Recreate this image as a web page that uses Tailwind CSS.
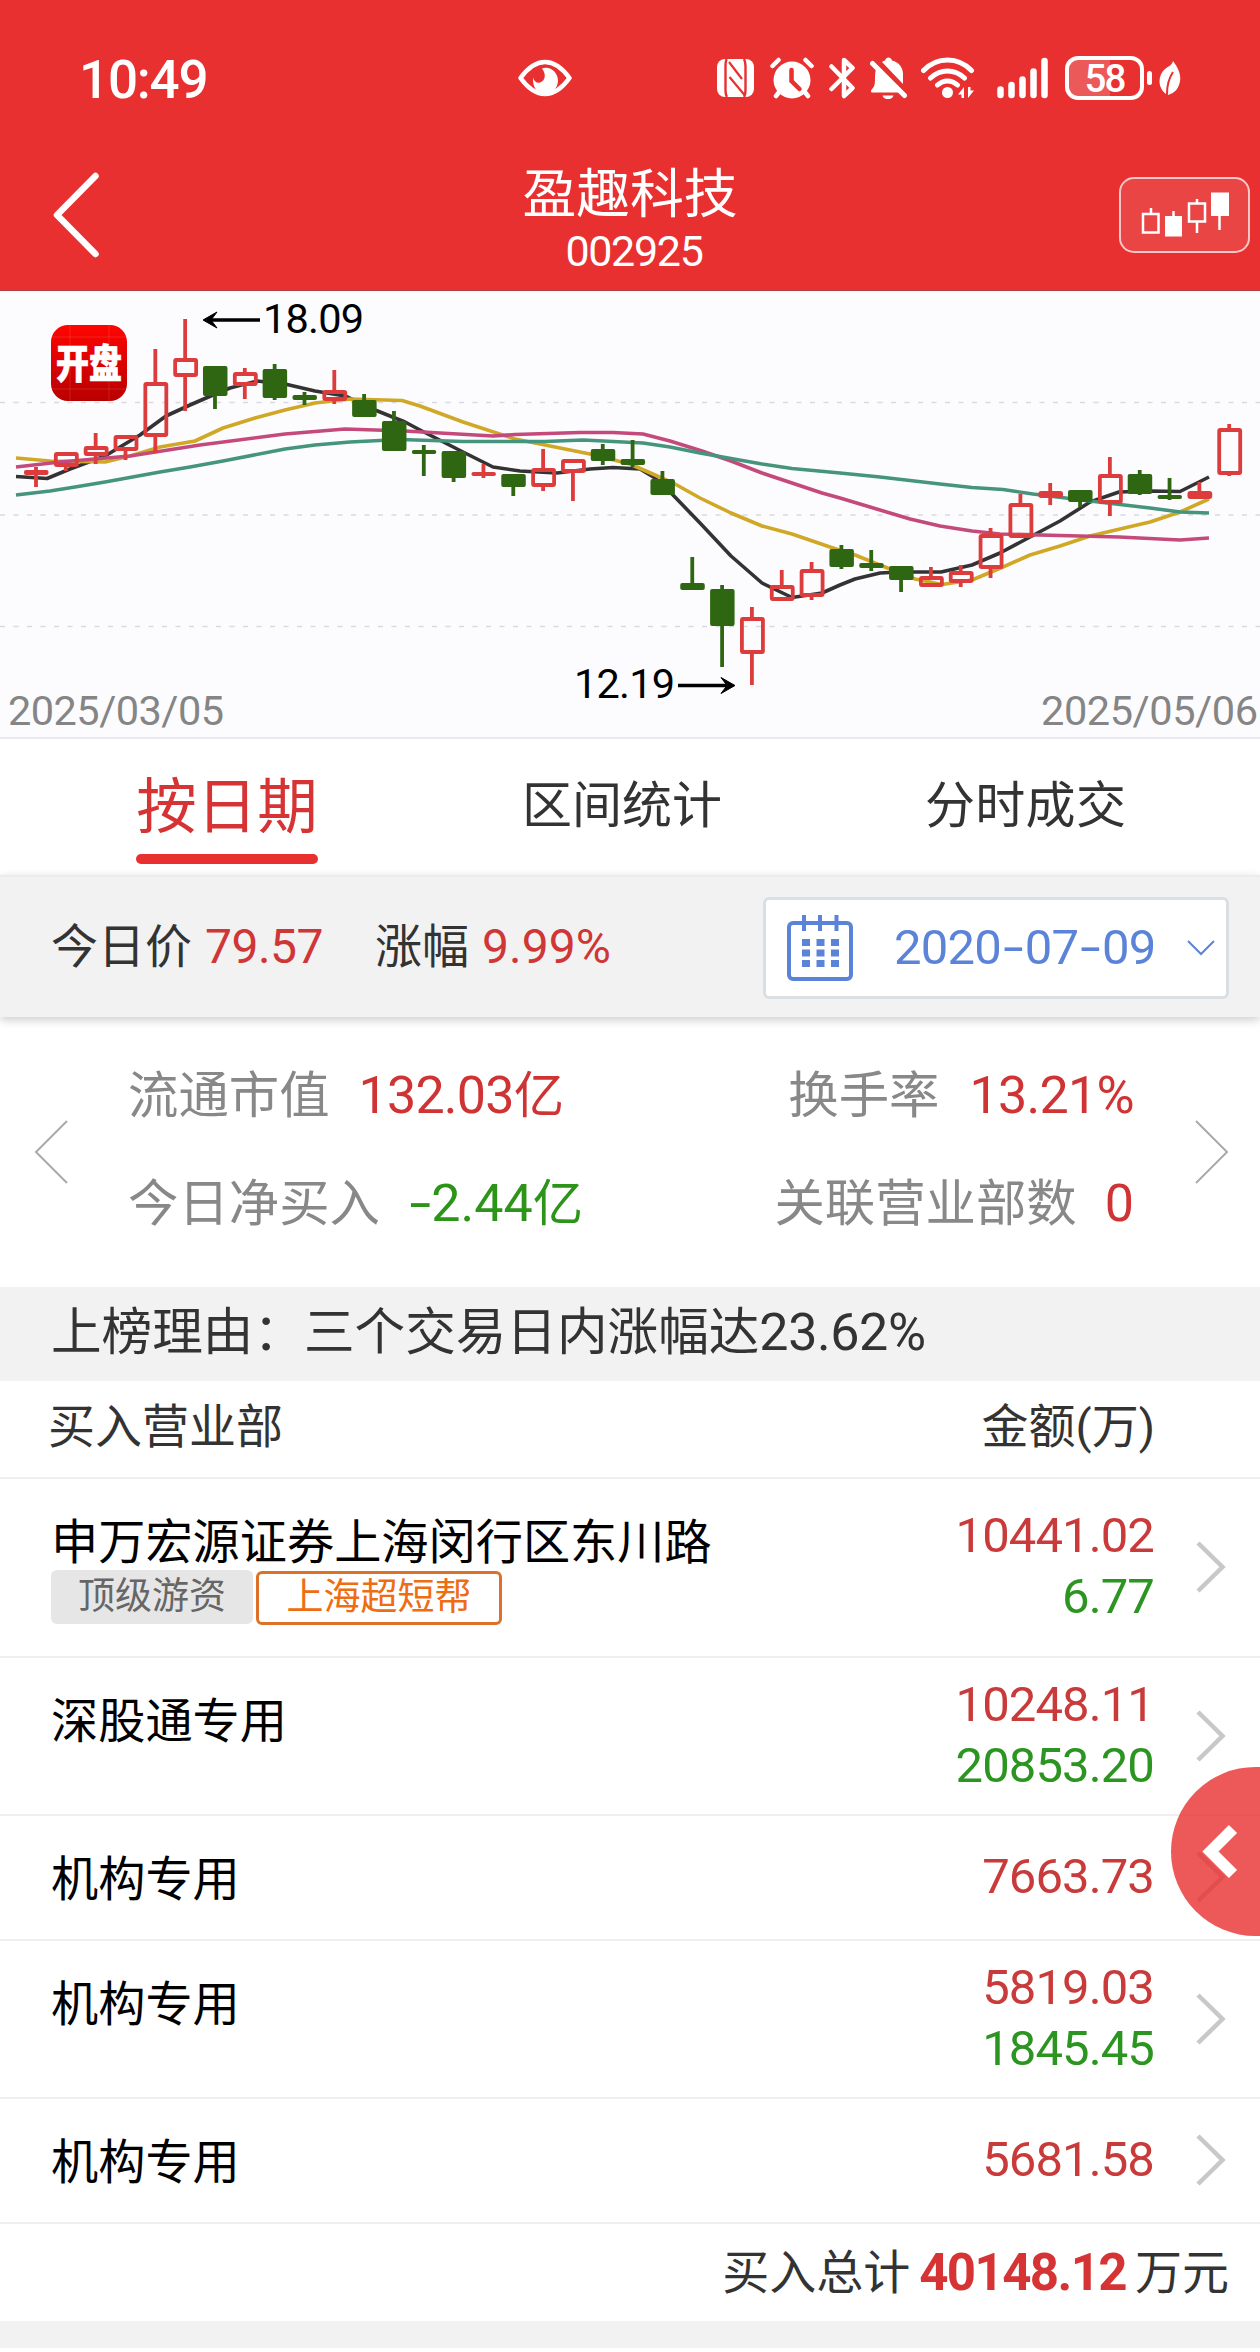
<!DOCTYPE html>
<html lang="zh-CN">
<head>
    <meta charset="UTF-8">
    <meta name="viewport" content="width=device-width, initial-scale=1.0">
    <title>盈趣科技 002925</title>
    <script src="https://cdn.jsdelivr.net/npm/@tailwindcss/browser@4"></script>
</head>
<body class="bg-white overflow-x-hidden font-[Roboto,'Noto_Sans_CJK_SC',sans-serif] text-[#333]">
    <div class="relative w-[1260px] h-[2352px] overflow-hidden">

        <header class="h-[291px] bg-[#e83030] border-b border-[#b04044] text-white">
            <!-- status bar -->
            <div class="flex items-center h-[156px] pl-[79px]">
                <span class="w-[439px] pt-[3px] text-[53px] leading-[60px] font-medium tracking-[-1.2px]">10:49</span>
                <svg class="w-[54px] h-[38px]" viewBox="0 0 54 38" fill="none">
                    <path d="M2.5 19C9 10 17 3 27 3s18 7 24.500 16C45 28 37 35 27 35S9 28 2.500 19z" stroke="#fff" stroke-width="4.500" stroke-linejoin="round"/>
                    <path d="M24 9.500c8-3 16 4 16 12 0 7-5 13-13 13s-12.500-6-12-16c1 4 4 6 7 5 6-2 6-9 2-14z" fill="#fff"/>
                </svg>
                <svg class="ml-[145px] w-[37px] h-[38px]" viewBox="0 0 37 38" fill="none" stroke="#e83030">
                    <rect width="37" height="38" rx="8" fill="#fff" stroke="none"/>
                    <path d="M9.500 0C8.500 3 8.500 4 8.500 7v24c0 4 0 5 1.500 7M27 0c1.500 3 1.500 4 1.500 7v24c0 3 0 5-1.500 7" stroke-width="2.400"/>
                    <path d="M12 3l13 17M12.500 18l15 18" stroke-width="2.200"/>
                </svg>
                <svg class="ml-[16px] w-[44px] h-[42px]" viewBox="0 0 44 42" fill="none" stroke="#fff" stroke-linecap="round">
                    <circle cx="22" cy="23" r="18.500" fill="#fff" stroke="none"/>
                    <path d="M2.500 9l6-6M41.500 9l-6-6M10 34l-4 5M34 34l4 5" stroke-width="4.500"/>
                    <path d="M21.500 13v11l8 8" stroke="#e83030" stroke-width="4.500"/>
                </svg>
                <svg class="ml-[15px] w-[26px] h-[42px]" viewBox="0 0 26 42" fill="none" stroke="#fff" stroke-width="4.500" stroke-linecap="round" stroke-linejoin="round">
                    <path d="M2.500 9.500l21 21.500-8.500 8V3l8.500 8L2.500 32"/>
                </svg>
                <svg class="ml-[15px] w-[37px] h-[42px]" viewBox="0 0 37 42">
                    <path d="M7 9L32 35.500H2.500c-2 0-2-2 0-4C5 29 5 26 5 20c0-5 1-8 2-11zM12 5c1-1 2-1 3-1.500 1-4 6-4 7 0C29 5 33 11 33 17v10zM12.500 38.500h11c-1.500 5-9.500 5-11 0z" fill="#fff"/>
                    <path d="M2.500 6.500l32 32" stroke="#fff" stroke-width="5" stroke-linecap="round"/>
                    <path d="M8 4l29 30" stroke="#e83030" stroke-width="2.500"/>
                </svg>
                <svg class="ml-[14px] w-[54px] h-[42px]" viewBox="0 0 54 42" fill="none" stroke="#fff" stroke-width="5" stroke-linecap="round">
                    <path d="M2.500 13.500C16-.5 37-.5 50.500 13.500M9.500 21c10-9.500 24-9.500 34 0M16.500 28c6-5.500 14-5.500 20 0"/>
                    <circle cx="26.500" cy="35.500" r="5.500" fill="#fff" stroke="none"/>
                    <path d="M43 30v11h-2.500v-3.500H37zM47 41V30h2.500v3.500H53z" fill="#fff" stroke="none"/>
                </svg>
                <svg class="ml-[22px] w-[52px] h-[42px]" viewBox="0 0 52 42" stroke="#fff" stroke-width="6.500" stroke-linecap="round">
                    <path d="M3.500 32.500v5.500M14.500 28v10M25.500 22.500v15.500M36.500 14.500v23.500M47.500 4v34"/>
                </svg>
                <div class="ml-[16px] relative w-[79px] h-[44px] border-4 border-white rounded-[13px] flex items-center justify-center bg-linear-to-r from-white/20 from-58% to-transparent to-58%">
                    <span class="pt-px text-[38.5px] leading-[36px] font-medium tracking-[-2px]">58</span>
                </div>
                <div class="ml-[3px] w-[5px] h-[14px] rounded-full bg-white"></div>
                <svg class="ml-[7px] w-[22px] h-[34px]" viewBox="0 0 22 34">
                    <path d="M14 0c6 8 8 14 7 20-1 7-5 12-12 14l-.5-3-1.500 2C-2 26-1 14 6 8c4-3 7-4 8-8z" fill="#fff"/>
                    <path d="M14 11C10 17 8 24 8 33" stroke="#e83030" stroke-width="2" fill="none"/>
                </svg>
            </div>
            <!-- title bar -->
            <div class="flex items-center justify-between h-[118px] pl-[51px] pr-[10px]">
                <svg class="w-[131px] h-[88px]" viewBox="0 0 131 88" fill="none" stroke="#fff" stroke-width="6.500" stroke-linecap="round" stroke-linejoin="round">
                    <path d="M44.500 5L6 44l38.500 39"/>
                </svg>
                <div class="text-center pt-[11px] pr-[41px]">
                    <h1 class="text-[53.8px] leading-[62px] font-normal">盈趣科技</h1>
                    <p class="text-[43px] leading-[51px] tracking-[-1.3px] pl-[8px]">002925</p>
                </div>
                <div class="w-[131px] h-[76px] border-2 border-white/70 rounded-[15px] bg-white/10">
                    <svg viewBox="1120 179 127 72" fill="none" stroke="#fff" stroke-width="2.500">
                        <path d="M1142 214h15.500v18.500H1142zM1150 208v6M1188 203.500h16v18h-16zM1196 199v4M1196 222v11M1172.500 211v8M1218.500 214v16"/>
                        <path d="M1164 216h17v20.500h-17zM1210 192.500h18v23.500h-18z" fill="#fff" stroke="none"/>
                    </svg>
                </div>
            </div>
        </header>

        <!-- k-line chart, filled by script -->
        <section class="h-[448px] bg-[#fcfcff] border-b-2 border-[#e9eaee]">
            <svg id="chart" class="block w-[1260px] h-[446px]" viewBox="0 291 1260 446"></svg>
        </section>

        <nav class="flex h-[136px] items-center text-[50px] leading-[60px]">
            <div class="ml-[136px] w-[182px] h-[125px] self-start flex flex-col justify-between text-center text-[60.5px] text-[#d63434]">
                <span class="pt-[39px]">按日期</span>
                <i class="block h-[10px] rounded-full bg-[#e83030]"></i>
            </div>
            <span class="ml-[204px] pb-[2px]">区间统计</span>
            <span class="ml-[203px] pb-[2px] tracking-[0.3px]">分时成交</span>
        </nav>

        <section class="relative flex items-center h-[142px] bg-[#f2f2f2] border-t-2 border-[#ececec] pl-[51px] pr-[31px] text-[47px] leading-[60px] shadow-[0_3px_9px_rgba(0,0,0,0.2)]">
            <span>今日价</span>
            <span class="ml-[13px] text-[48px] tracking-[-0.5px] text-[#cf3636]">79.57</span>
            <span class="ml-[52px]">涨幅</span>
            <span class="ml-[13px] text-[48px] text-[#cf3636]">9.99%</span>
            <div class="ml-auto mt-px flex items-center w-[466px] h-[102px] border-3 border-[#dadfe4] rounded-md bg-white pl-[21px] text-[49px] text-[#5b84d8]">
                <svg class="w-[66px] h-[66px]" viewBox="0 0 66 66" fill="none" stroke="#5b84d8" stroke-width="4">
                    <rect x="2" y="8" width="62" height="56" rx="4"/>
                    <path d="M17 0v16M33 0v16M49.500 0v16"/>
                    <path d="M15 27.500h37M15 38h37M15 48.500h37" stroke-width="7" stroke-dasharray="8 6.500"/>
                </svg>
                <span class="ml-[41px] tracking-[-0.8px]">2020<span class="inline-block px-[5.500px] scale-x-150">-</span>07<span class="inline-block px-[5.500px] scale-x-150">-</span>09</span>
                <svg class="ml-[32px] w-[28px] h-[16px]" viewBox="0 0 28 16" fill="none" stroke="#5b84d8" stroke-width="2">
                    <path d="M1 1l13 13L27 1"/>
                </svg>
            </div>
        </section>

        <section class="flex items-center h-[270px] pl-[34px] pr-[31px] text-[50.4px] leading-[108px] text-[#888]">
            <svg class="w-[34px] h-[64px]" viewBox="0 0 34 64" fill="none" stroke="#aaa" stroke-width="2"><path d="M33 1L2 32l31 31"/></svg>
            <div class="ml-[60px] pb-[4px]">
                <p>流通市值<span class="ml-[29px] text-[#cf3333]"><span class="text-[52px] tracking-[-0.8px]">132.03</span>亿</span></p>
                <p>今日净买入<span class="ml-[29px] text-[#2c9418]"><span class="text-[52px]"><span class="inline-block px-[4px] scale-x-150">-</span>2.44</span>亿</span></p>
            </div>
            <div class="ml-auto mr-[61px] pb-[4px] text-right">
                <p>换手率<span class="ml-[30px] text-[52px] tracking-[-0.7px] text-[#cf3333]">13.21%</span></p>
                <p>关联营业部数<span class="ml-[28px] text-[52px] text-[#cf3333]">0</span></p>
            </div>
            <svg class="w-[34px] h-[64px]" viewBox="0 0 34 64" fill="none" stroke="#aaa" stroke-width="2"><path d="M1 1l31 31L1 63"/></svg>
        </section>

        <p class="h-[94px] bg-[#f2f2f2] pl-[51px] text-[50.6px] leading-[92px]">上榜理由：三个交易日内涨幅达<span class="text-[52px] tracking-[-0.4px]">23.62%</span></p>

        <div class="flex justify-between h-[98px] border-b-2 border-[#efefef] pl-[48px] pr-[105px] text-[47px] leading-[92px]">
            <span>买入营业部</span>
            <span>金额(万)</span>
        </div>

        <div id="rows"></div>

        <div class="flex justify-end items-center h-[97px] pr-[31px] text-[47px] leading-[60px]">
            <span>买入总计</span>
            <b class="mx-[9px] text-[51px] text-[#d63434] tracking-[-1.6px] font-bold">40148.12</b>
            <span>万元</span>
        </div>
        <div class="h-[27px] bg-[#f2f2f2]"></div>

        <!-- floating button -->
        <div class="absolute left-[1171px] top-[1767px] w-[169px] h-[169px] rounded-full bg-[#e83030]/80">
            <svg class="w-[89px] h-[169px]" viewBox="0 0 89 169" fill="none" stroke="#fff" stroke-width="11.500"><path d="M62 62L39.500 84.500 62 107"/></svg>
        </div>
    </div>

    <script>
        const rows = [
            { name: '申万宏源证券上海闵行区东川路', tags: true, buy: '10441.02', sell: '6.77', size: 'h-[179px]' },
            { name: '深股通专用', buy: '10248.11', sell: '20853.20', size: 'h-[158px]' },
            { name: '机构专用', buy: '7663.73', size: 'h-[125px]' },
            { name: '机构专用', buy: '5819.03', sell: '1845.45', size: 'h-[158px]' },
            { name: '机构专用', buy: '5681.58', size: 'h-[125px]' },
        ];
        const tags = `
            <div class="flex items-start gap-[3px] mt-[3px] text-[37px]">
                <span class="w-[202px] h-[54px] rounded-md bg-[#e6e6e6] text-center leading-[54px] text-[#666]">顶级游资</span>
                <span class="w-[246px] h-[54px] mt-px rounded-md border-3 border-[#dc7228] text-center leading-[48px] text-[#ee6c12]">上海超短帮</span>
            </div>`;
        document.getElementById('rows').innerHTML = rows.map(r => `
            <div class="flex items-center ${r.size} border-b-2 border-[#efefef] pl-[51px] pr-[34px]">
                <div class="self-start pt-[40px] text-[47.2px] leading-[48px] text-black">${r.name}${r.tags ? tags : ''}</div>
                <div class="ml-auto pb-[3px] text-right text-[49px] leading-[61px] tracking-[-0.9px]">
                    <p class="text-[#c93a3a]">${r.buy}</p>
                    ${r.sell ? `<p class="text-[#2c9420]">${r.sell}</p>` : ''}
                </div>
                <svg class="ml-[42px] mb-px w-[30px] h-[54px]" viewBox="0 0 30 54" fill="none" stroke="#c8c8c8" stroke-width="4.500"><path d="M2 3l24.500 24L2 51"/></svg>
            </div>
        `).join('');

        // body top, body bottom, high, low, up
        const candles = [
            [470,475,467,487,1],[452,467,452,471,1],[446,456,433,464,1],[435,451,435,460,1],[382,437,349,453,1],
            [358,377,319,411,1],[366,396,366,409,0],[372,386,368,399,1],[369,398,364,400,0],[395,400,392,405,0],
            [390,401,370,404,1],[400,417,394,417,0],[421,451,411,451,0],[450,454,445,476,0],[451,478,451,482,0],
            [472,476,464,478,1],[474,487,474,496,0],[468,487,449,491,1],[459,473,459,501,1],[449,461,444,465,0],
            [459,465,440,467,0],[479,495,471,495,0],[583,590,557,590,0],[589,626,585,667,0],[617,654,607,685,1],
            [585,601,570,601,1],[569,597,562,600,1],[549,567,545,569,0],[563,568,550,571,0],[566,580,566,592,0],
            [576,587,567,587,1],[571,583,565,587,1],[534,569,528,578,1],[503,538,494,538,1],[491,498,483,505,1],
            [490,502,490,507,0],[474,504,457,516,1],[474,494,470,495,0],[495,499,478,500,0],[491,499,482,499,1],
            [428,475,424,476,1],
        ];
        const lines = {
            '#333333': '16,476.5 47,478.5 70,469 105,456 140,435 166,416 190,405 213,395 230,388 257,381 285,384 315,391 345,396 375,410 405,422 420,430 463,452 493,467 520,471 557,473 590,469 613,467.5 640,469 655,478 673,495 700,523 731,556 762,583 792,597.5 822,593 840,585 855,579 880,573 900,572 941,572 972,565 1000,553 1030,537 1060,521 1090,502 1119,492 1150,491 1180,491.5 1209,477',
            '#d0a826': '16,458 50,461 105,462 130,456 160,447 195,441 223,428 255,418 285,410 315,403 350,399 402,400.5 420,406 463,422 515,439 555,447 590,454 630,464 655,475 675,484 700,498 731,513 762,526 792,534 830,547 855,555 885,567 915,579 942,584.5 972,580 1003,567 1030,555 1060,546 1090,536 1150,522 1180,512 1209,499',
            '#c44a7c': '16,467 60,462 130,456 200,445 285,434 345,429 405,431 493,436 515,434.5 580,432.5 613,432.5 643,434 670,441 702,451 731,461 762,473 822,493 840,498 870,507 910,519 940,526 972,531 1000,534 1060,535.5 1119,537 1180,540 1209,538',
            '#45957d': '16,495 50,491 75,487 105,482 160,472 190,467 223,461 285,449 315,445 350,442 400,439.5 463,441.5 545,441.5 583,440 643,443 670,447 700,453 762,464 792,468.5 840,473 880,477 940,484 972,487.5 1003,489.5 1033,494 1090,501 1150,508 1180,512 1209,513',
        };
        let svg = [402.5, 515, 626.5].map(y => `<path d="M0 ${y}H1260" stroke="#d9d9de" stroke-width="1.5" stroke-dasharray="5 8.5"/>`).join('');
        for (const [color, pts] of Object.entries(lines)) {
            svg += `<polyline points="${pts}" fill="none" stroke="${color}" stroke-width="3.6" stroke-linejoin="round"/>`;
        }
        candles.forEach(([top, bottom, high, low, up], i) => {
            const x = 36 + i * 29.83;
            const color = up ? '#dc3c3c' : '#2f6612';
            svg += `<path d="M${x} ${high}V${top + 1}M${x} ${bottom - 1}V${low}" stroke="${color}" stroke-width="3.8"/>`;
            if (up && bottom - top > 5) {
                svg += `<rect x="${x - 10}" y="${top + 2}" width="21" height="${bottom - top - 4}" rx="1" fill="none" stroke="${color}" stroke-width="3.8"/>`;
            } else {
                svg += `<rect x="${x - 12}" y="${top}" width="24.500" height="${bottom - top}" rx="2" fill="${color}"/>`;
            }
        });
        svg += `
            <g stroke="#000" stroke-width="3.6" fill="none">
                <path d="M260 320H208M678 685.500H730"/>
                <path d="M217 312L203 320l14 8-6-8zM721 677.500L735 685.500l-14 8 6-8z" fill="#000" stroke-width="1"/>
            </g>
            <g font-size="41.5">
                <text x="263" y="332.500" textLength="101">18.09</text>
                <text x="574" y="698" textLength="101">12.19</text>
                <text x="8" y="725" textLength="216" fill="#858585">2025/03/05</text>
                <text x="1041" y="725" textLength="217" fill="#858585">2025/05/06</text>
            </g>
            <defs>
                <linearGradient id="logo" x2="0" y2="1"><stop stop-color="#ff0500"/><stop offset="1" stop-color="#b80000"/></linearGradient>
            </defs>
            <rect x="51" y="325" width="76" height="76" rx="17" fill="url(#logo)"/>
            <path d="M51 337h76M51 389h76M70 325v76M109 325v76" stroke="#fff" stroke-opacity="0.12"/>
            <text x="56" y="378" font-size="33" font-weight="900" fill="#fff" stroke="#fff" stroke-width="0.6" textLength="66" transform="translate(0 -75.400) scale(1 1.200)">开盘</text>`;
        document.getElementById('chart').innerHTML = svg;
    </script>
</body>
</html>
